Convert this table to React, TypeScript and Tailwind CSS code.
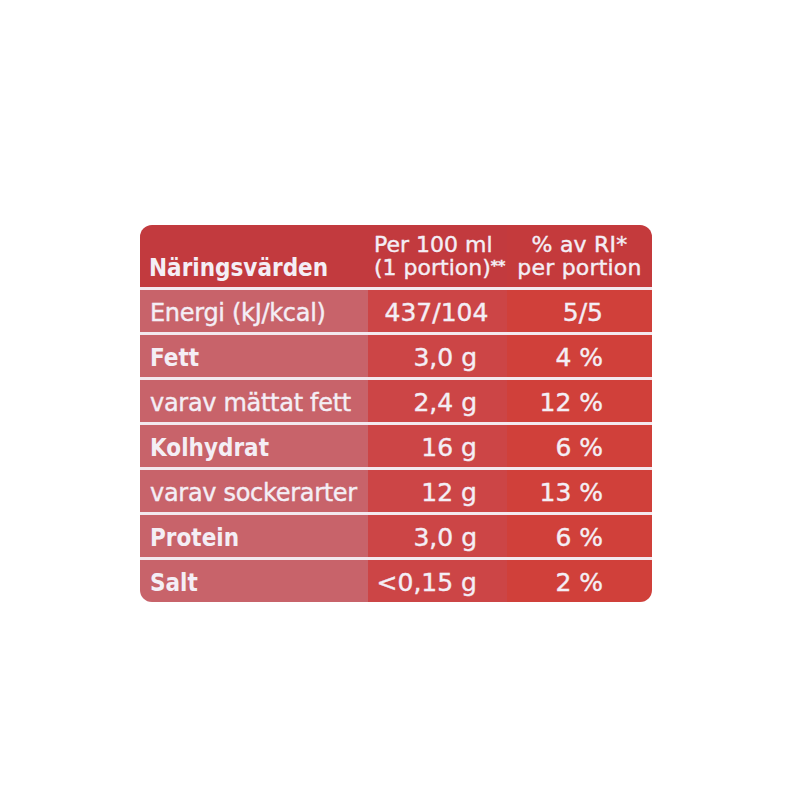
import React from "react";

interface Row {
  label: string;
  bold?: boolean;
  amount: string;
  ri: string;
  center?: boolean;
}

const rows: Row[] = [
  { label: "Energi (kJ/kcal)", amount: "437/104", ri: "5/5", center: true },
  { label: "Fett", bold: true, amount: "3,0 g", ri: "4 %" },
  { label: "varav mättat fett", amount: "2,4 g", ri: "12 %" },
  { label: "Kolhydrat", bold: true, amount: "16 g", ri: "6 %" },
  { label: "varav sockerarter", amount: "12 g", ri: "13 %" },
  { label: "Protein", bold: true, amount: "3,0 g", ri: "6 %" },
  { label: "Salt", bold: true, amount: "<0,15 g", ri: "2 %" },
];

const bold = "font-['DejaVu_Sans_Condensed','DejaVu_Sans',sans-serif] font-bold";
// regular face looks a touch heavier on the print
const medium = "[-webkit-text-stroke:0.4px_#f4eef5]";

export default function App() {
  return (
    <div className="w-[800px] h-[800px] bg-white pt-[225px] pl-[140px] font-['DejaVu_Sans',sans-serif] text-[#f4eef5]">
      <div className="w-[512px] rounded-[12px] overflow-hidden bg-[#f3e8ee] grid grid-cols-[228px_139px_145px] gap-y-[3px]">
        {/* header */}
        <div className={`h-[62px] bg-[#c23a3e] flex items-end pl-[9px] pb-[7px] text-[24px] leading-none ${bold}`}>
          Näringsvärden
        </div>
        <div className={`h-[62px] bg-[#c23a3e] flex flex-col justify-center pl-[6px] text-[22px] leading-[23px] pt-[2px] ${medium}`}>
          <span>Per 100 ml</span>
          <span>
            (1 portion)<span className="text-[14px] font-bold relative top-[-5px]">**</span>
          </span>
        </div>
        <div className={`h-[62px] bg-[#c43a3c] flex flex-col justify-center items-center text-[22px] leading-[23px] tracking-[0.2px] ${medium}`}>
          <span>% av RI*</span>
          <span>per portion</span>
        </div>

        {rows.map((r) => (
          <React.Fragment key={r.label}>
            <div
              className={`h-[42px] bg-[#c8636a] flex items-center pl-[10px] pt-[4px] text-[24px] ${
                r.bold ? bold : `font-normal tracking-[-0.3px] ${medium}`
              }`}
            >
              {r.label}
            </div>
            <div
              className={`h-[42px] bg-[#cc4546] flex items-center pt-[4px] text-[25px] ${medium} ${
                r.center ? "justify-center pr-[2px]" : "justify-end pr-[30px]"
              }`}
            >
              {r.amount}
            </div>
            <div className={`h-[42px] bg-[#d0403a] flex items-center justify-end pt-[4px] pr-[49px] text-[25px] ${medium}`}>
              {r.ri}
            </div>
          </React.Fragment>
        ))}
      </div>
    </div>
  );
}
